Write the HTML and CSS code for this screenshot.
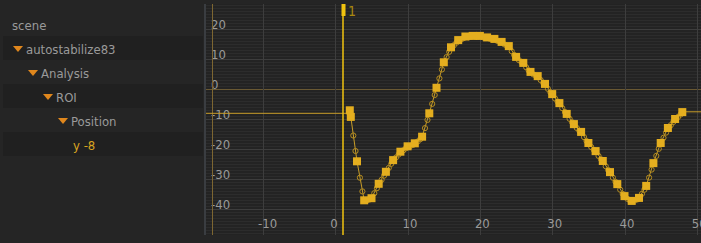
FILE: index.html
```html
<!DOCTYPE html>
<html lang="en">
<head>
    <meta charset="UTF-8">
    <meta name="viewport" content="width=device-width, initial-scale=1.0">
    <title>Curve Editor</title>
    <link rel="stylesheet" href="styles.css">
</head>
<body>
    <div class="tree">
        <div class="row lvl0">scene</div>
        <div class="row dark lvl1"><span class="tri"></span>autostabilize83</div>
        <div class="row lvl2"><span class="tri"></span>Analysis</div>
        <div class="row dark lvl3"><span class="tri"></span>ROI</div>
        <div class="row lvl4"><span class="tri"></span>Position</div>
        <div class="row dark lvl5 curve-name">y -8</div>
    </div>
    <div class="graph">
        <svg id="plot" width="495" height="231"></svg>
    </div>

    <script>
        // keyed values of the y curve, [frame, value]
        const keys = [
            [2.0, -7], [2.15, -9.2], [3, -24], [4, -37], [5, -36.3], [6, -31.5], [7, -27.5],
            [8, -23.6], [9, -20.8], [10, -19], [11, -18], [12, -15.8], [13, -8], [14, 0.5],
            [15, 9], [16, 14], [17, 16.4], [18, 17.6], [19, 17.8], [20, 17.8], [21, 17.3],
            [22, 16.8], [23, 15.8], [24, 14.4], [25, 10.8], [26, 8.8], [27, 5.8], [28, 4.4],
            [29, 1.8], [30, -1.6], [31, -4.6], [32, -8.2], [33, -11.6], [34, -14.2],
            [35, -17.9], [36, -20.6], [37, -23.9], [38, -27.6], [39, -31.6], [40, -35.6],
            [41, -37.2], [42, -36.2], [43, -32.2], [44, -24.6], [45, -17.9], [46, -12.9],
            [47, -9.9], [48, -7.6]
        ];

        const W = 495, H = 231;
        const fx = f => 129.3 + f * 7.23;
        const vy = v => 85.3 - v * 3;
        const px = n => Math.round(n) + 0.5;

        function drawPlot() {
            let s = '';

            // minor value lines, one per unit
            for (let k = -60; k <= 30; k++) {
                const y = px(vy(k));
                if (y < 0 || y > H) continue;
                s += `<line class="minor" x1="0" x2="${W}" y1="${y}" y2="${y}"/>`;
            }
            for (let v = -40; v <= 20; v += 10) {
                const y = px(vy(v));
                s += `<line class="${v === 0 ? 'zero' : 'major'}" x1="0" x2="${W}" y1="${y}" y2="${y}"/>`;
            }
            for (let f = -10; f <= 50; f += 10) {
                const x = px(fx(f));
                s += `<line class="major" x1="${x}" x2="${x}" y1="0" y2="${H}"/>`;
            }

            // labels
            for (let v = -40; v <= 20; v += 10) {
                s += `<text class="label" x="5" y="${vy(v)}">${v}</text>`;
            }
            for (let f = -10; f <= 50; f += 10) {
                s += `<text class="label" x="${fx(f) - 5}" y="224">${f}</text>`;
            }

            // range start
            s += `<line class="range" x1="6.5" x2="6.5" y1="0" y2="${H}"/>`;

            // curve
            const first = keys[0], last = keys[keys.length - 1];
            s += `<line class="curve" x1="0" x2="${fx(first[0])}" y1="${vy(-8)}" y2="${vy(-8)}"/>`;
            s += `<line class="curve" x1="${fx(last[0])}" x2="${W}" y1="${vy(-7.5)}" y2="${vy(-7.5)}"/>`;
            const pts = keys.map(k => `${fx(k[0]).toFixed(1)},${vy(k[1]).toFixed(1)}`).join(' ');
            s += `<polyline class="curve" points="${pts}"/>`;

            for (let i = 1; i < keys.length; i++) {
                const a = keys[i - 1], b = keys[i];
                [0.4, 0.75].forEach(t => {
                    const f = a[0] + (b[0] - a[0]) * t;
                    const v = a[1] + (b[1] - a[1]) * t;
                    s += `<circle class="sample" cx="${fx(f).toFixed(1)}" cy="${(vy(v) + 0.8).toFixed(1)}" r="2.6"/>`;
                });
            }
            keys.forEach(k => {
                s += `<rect class="key" x="${(fx(k[0]) - 4).toFixed(1)}" y="${(vy(k[1]) - 4).toFixed(1)}" width="8" height="8"/>`;
            });

            // current frame
            const cx = px(fx(1)) - 0.5;
            s += `<line class="frame" x1="${cx}" x2="${cx}" y1="0" y2="${H}"/>`;
            s += `<rect class="frame-tab" x="${cx - 1.5}" y="0" width="4" height="12"/>`;
            s += `<text class="frame-num" x="${cx + 5}" y="12">1</text>`;

            document.getElementById('plot').innerHTML = s;
        }

        drawPlot();
    </script>
</body>
</html>
```

FILE: styles.css
```css
body {
    margin: 0;
    padding: 0;
    height: 243px;
    overflow: hidden;
    display: flex;
    align-items: flex-start;
    background-color: #252525;
    color: #9a9a9a;
    font-family: "DejaVu Sans Condensed", "DejaVu Sans", sans-serif;
    font-size: 13px;
}
.tree {
    width: 204px;
    flex-shrink: 0;
    padding-top: 12px;
    box-sizing: border-box;
}
.row {
    margin-left: 3px;
    width: 200px;
    height: 24px;
    padding-top: 3px;
    line-height: 21px;
    box-sizing: border-box;
    white-space: nowrap;
}
.row.dark {
    background-color: #202020;
}
.lvl0 { padding-left: 9px; }
.lvl1 { padding-left: 10px; }
.lvl2 { padding-left: 25px; }
.lvl3 { padding-left: 40px; }
.lvl4 { padding-left: 55px; }
.lvl5 { padding-left: 70px; }
.curve-name {
    color: #d9a520;
}
.tri {
    display: inline-block;
    width: 0;
    height: 0;
    border-left: 5px solid transparent;
    border-right: 5px solid transparent;
    border-top: 6px solid #e0871d;
    margin-right: 3px;
    vertical-align: 2px;
}
.graph {
    margin-top: 4px;
    height: 231px;
    border-left: 2px solid #3a3d41;
    background-color: #232323;
}
.graph svg {
    display: block;
}
.minor {
    stroke: #2c2c2c;
    stroke-width: 1;
}
.major {
    stroke: #3d3d3d;
    stroke-width: 1;
}
.zero {
    stroke: #6a5933;
    stroke-width: 1;
}
.range {
    stroke: #7d6631;
    stroke-width: 1;
}
.label {
    fill: #9a9a9a;
    font-family: "DejaVu Sans Condensed", "DejaVu Sans", sans-serif;
    font-size: 13px;
}
.curve {
    fill: none;
    stroke: #c89d28;
    stroke-width: 1;
}
.sample {
    fill: none;
    stroke: #b68d1f;
    stroke-width: 1;
}
.key {
    fill: #e4ae1f;
}
.frame {
    stroke: #f0c30f;
    stroke-width: 1.5;
}
.frame-tab {
    fill: #f0c30f;
}
.frame-num {
    fill: #a8870e;
    font-family: "DejaVu Sans Condensed", "DejaVu Sans", sans-serif;
    font-size: 14px;
}
```
